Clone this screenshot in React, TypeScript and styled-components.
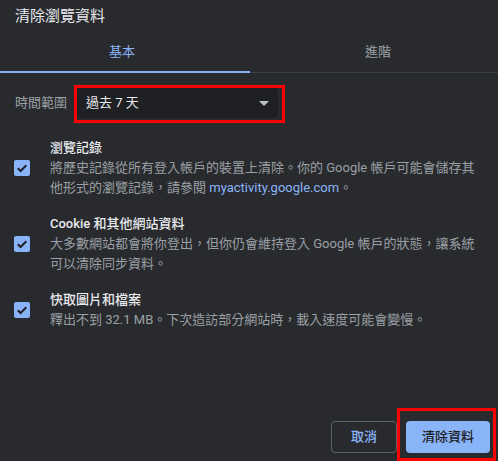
import React from "react";
import styled, { createGlobalStyle } from "styled-components";

const Global = createGlobalStyle`
  html, body { margin: 0; padding: 0; background: #292a2d; }
  body {
    font-family: Roboto, "Noto Sans CJK TC", "Noto Sans", sans-serif;
    -webkit-font-smoothing: antialiased;
  }
  * { box-sizing: border-box; }
`;

const Page = styled.div`
  width: 498px;
  height: 461px;
  display: flex;
  flex-direction: column;
  background: #292a2d;
  color: #e8eaed;
  overflow: hidden;
`;

const Title = styled.div`
  height: 32px;
  padding: 5px 15px 0;
  font-size: 15px;
  line-height: 23px;
  color: #e8eaed;
`;

const Tabs = styled.div`
  display: flex;
  height: 41px;
  border-bottom: 1px solid #3c4043;
`;

const Tab = styled.div<{ $active?: boolean; $width?: number; $shift?: number }>`
  position: relative;
  flex: ${(p) => (p.$width ? `0 0 ${p.$width}px` : "1")};
  display: flex;
  align-items: center;
  justify-content: center;
  padding-left: ${(p) => Math.max(0, p.$shift || 0)}px;
  padding-right: ${(p) => Math.max(0, -(p.$shift || 0))}px;
  font-size: 13px;
  line-height: 20px;
  color: ${(p) => (p.$active ? "#8ab4f8" : "#9aa0a6")};
  &::after {
    content: "";
    display: ${(p) => (p.$active ? "block" : "none")};
    position: absolute;
    left: 0;
    right: 0;
    bottom: -1px;
    height: 2px;
    background: #8ab4f8;
  }
`;

const RangeRow = styled.div`
  display: flex;
  align-items: center;
  padding: 15px 0 0 15px;
  gap: 10px;
`;

const RangeLabel = styled.span`
  font-size: 13px;
  line-height: 20px;
  color: #9aa0a6;
  width: 52px;
`;

const Highlight = styled.div<{ $t: number; $r: number; $b: number; $l: number }>`
  position: relative;
  display: inline-flex;
  &::after {
    content: "";
    position: absolute;
    top: -${(p) => p.$t}px;
    right: -${(p) => p.$r}px;
    bottom: -${(p) => p.$b}px;
    left: -${(p) => p.$l}px;
    border: 3px solid #ff0000;
    pointer-events: none;
  }
`;

const Select = styled.div`
  width: 201px;
  height: 30px;
  border-radius: 4px;
  background: #1f2023;
  display: flex;
  align-items: center;
  justify-content: space-between;
  padding: 0 9px 0 9px;
  font-size: 13px;
  line-height: 20px;
  color: #e8eaed;
`;

const Arrow = styled.span`
  width: 0;
  height: 0;
  border-left: 5px solid transparent;
  border-right: 5px solid transparent;
  border-top: 5px solid #bdc1c6;
`;

const ItemList = styled.div`
  display: flex;
  flex-direction: column;
  gap: 16px;
  padding-top: 20px;
`;

const Item = styled.div`
  display: flex;
  align-items: center;
  gap: 20px;
  padding-left: 14px;
`;

const CheckBox = styled.span`
  flex: 0 0 16px;
  width: 16px;
  height: 16px;
  border-radius: 2px;
  background: #8ab4f8;
  display: flex;
  align-items: center;
  justify-content: center;
`;

const ItemText = styled.div`
  width: 434px;
  font-size: 13px;
  line-height: 20px;
`;

const ItemTitle = styled.div`
  color: #e8eaed;
  font-weight: 500;
`;

const ItemDesc = styled.div`
  color: #9aa0a6;
`;

const Link = styled.span`
  color: #8ab4f8;
`;

const Footer = styled.div`
  margin-top: auto;
  display: flex;
  justify-content: flex-end;
  align-items: center;
  gap: 9px;
  padding: 0 8px 8px 0;
`;

const Button = styled.button<{ $primary?: boolean }>`
  height: 32px;
  border-radius: 4px;
  font-family: inherit;
  font-size: 13px;
  font-weight: 500;
  line-height: 20px;
  cursor: pointer;
  padding: ${(p) => (p.$primary ? "0 16px" : "0 19px")};
  border: ${(p) => (p.$primary ? "none" : "1px solid #5f6368")};
  background: ${(p) => (p.$primary ? "#8ab4f8" : "transparent")};
  color: ${(p) => (p.$primary ? "#202124" : "#8ab4f8")};
`;

const Check = () => (
  <svg width="12" height="12" viewBox="0 0 12 12">
    <path d="M1.8 6.2 L4.6 9 L10.3 3.2" fill="none" stroke="#202124" strokeWidth="2" />
  </svg>
);

export default function App() {
  return (
    <>
      <Global />
      <Page>
        <Title>清除瀏覽資料</Title>
        <Tabs>
          <Tab $active $width={250} $shift={-6}>基本</Tab>
          <Tab $shift={8}>進階</Tab>
        </Tabs>
        <RangeRow>
          <RangeLabel>時間範圍</RangeLabel>
          <Highlight $t={3} $r={7} $b={5} $l={3}>
            <Select>
              <span>過去 7 天</span>
              <Arrow />
            </Select>
          </Highlight>
        </RangeRow>
        <ItemList>
          <Item>
            <CheckBox><Check /></CheckBox>
            <ItemText>
              <ItemTitle>瀏覽記錄</ItemTitle>
              <ItemDesc>
                將歷史記錄從所有登入帳戶的裝置上清除。你的 Google 帳戶可能會儲存其他形式的瀏覽記錄，請參閱 <Link>myactivity.google.com</Link>。
              </ItemDesc>
            </ItemText>
          </Item>
          <Item>
            <CheckBox><Check /></CheckBox>
            <ItemText>
              <ItemTitle>Cookie 和其他網站資料</ItemTitle>
              <ItemDesc>
                大多數網站都會將你登出，但你仍會維持登入 Google 帳戶的狀態，讓系統可以清除同步資料。
              </ItemDesc>
            </ItemText>
          </Item>
          <Item>
            <CheckBox><Check /></CheckBox>
            <ItemText>
              <ItemTitle>快取圖片和檔案</ItemTitle>
              <ItemDesc>釋出不到 32.1 MB。下次造訪部分網站時，載入速度可能會變慢。</ItemDesc>
            </ItemText>
          </Item>
        </ItemList>
        <Footer>
          <Button>取消</Button>
          <Highlight $t={13} $r={6} $b={8} $l={9}>
            <Button $primary>清除資料</Button>
          </Highlight>
        </Footer>
      </Page>
    </>
  );
}
